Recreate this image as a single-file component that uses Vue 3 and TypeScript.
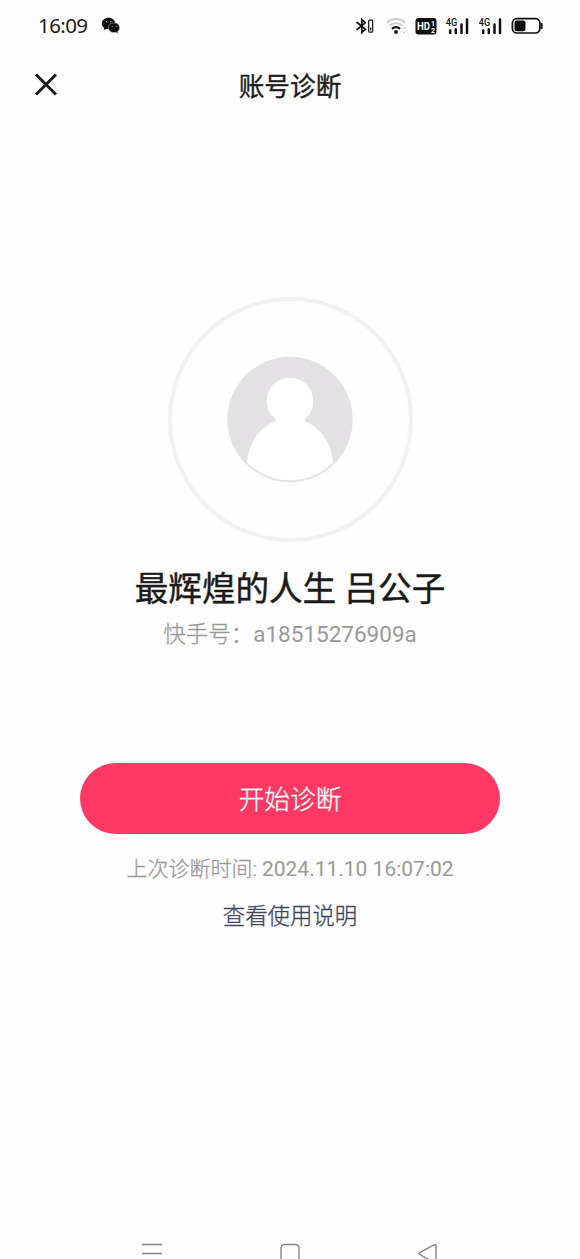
<script setup lang="ts">
const time = '16:09'
const account = {
  name: '最辉煌的人生 吕公子',
  id: 'a18515276909a',
  lastCheck: '2024.11.10 16:07:02',
}
const networks = ['sim1', 'sim2']
</script>

<template>
  <div class="screen">
    <header class="status">
      <span class="clock">{{ time }}</span>
      <svg class="wechat" width="20" height="18" viewBox="0 0 20 18">
        <path d="M7.500 .8C3.600.8 .8 3.300 .8 6.500c0 1.900.9 3.300 2.300 4.300L2.700 13.300l2.600-1.500c.7.2 1.400.3 2.200.3C11.200 12.100 14.200 9.700 14.200 6.500S11.200.8 7.500.8Z" fill="#0b0b0b" />
        <path d="M13 5.800c-3.200 0-5.600 2-5.600 4.900s2.400 4.900 5.600 4.900c.7 0 1.300-.1 1.900-.3l2.300 1.200-.5-2c1.200-.9 1.900-2.200 1.900-3.800 0-2.900-2.400-4.900-5.600-4.900Z" fill="#0b0b0b" stroke="#ccc" stroke-width=".5" />
        <g fill="#ccc"><circle cx="5.300" cy="4.600" r=".7" /><circle cx="9.700" cy="4.600" r=".7" /><circle cx="11.200" cy="9.300" r=".6" /><circle cx="15" cy="9.300" r=".6" /></g>
      </svg>
      <div class="indicators">
        <svg class="bluetooth" width="20" height="18" viewBox="0 0 20 18" fill="none" stroke="#111">
          <path d="M2.500 5 11.300 12.200 7.800 15.500V2.500l3.500 3.300L2.500 13" stroke-width="1.700" />
          <rect x="14.700" y="3.200" width="4" height="12" rx="1" stroke-width="1.200" />
          <path d="M16.700 10.500v3" stroke-width="1.200" />
        </svg>
        <svg class="wifi" width="22" height="18" viewBox="0 0 22 18" fill="none">
          <path d="M1.800 5.800C7 .8 15 .8 20.200 5.800" stroke="#d0d0d0" stroke-width="2" />
          <path d="M4.500 8.800c3.700-3.700 9.300-3.700 13 0" stroke="#ccc" stroke-width="1.800" />
          <path d="M7 11.800c2.400-2 5.600-2 8 0" stroke="#111" stroke-width="2.200" />
          <circle cx="11" cy="15" r="1.900" fill="#111" />
          <path d="m17.500 12 1.500-1.800 1.500 1.800m-3 2.200 1.500 1.800 1.500-1.800" stroke="#c8c8c8" />
        </svg>
        <svg class="hd" width="22" height="18" viewBox="0 0 22 18">
          <rect x=".5" y="1" width="21" height="16.500" rx="3" fill="#0c0c0c" />
          <text x="2" y="13.200" font-size="11.500" font-weight="700" textLength="13" lengthAdjust="spacingAndGlyphs" fill="#fff">HD</text>
          <text x="16" y="8.800" font-size="7" font-weight="700" fill="#fff">1</text>
          <text x="16" y="15.500" font-size="7" font-weight="700" fill="#fff">2</text>
        </svg>
        <svg v-for="network in networks" :key="network" class="signal" width="25" height="20" viewBox="0 0 25 20">
          <text x=".8" y="9.800" font-size="10.500" font-weight="500" textLength="11.500" lengthAdjust="spacingAndGlyphs" fill="#111">4G</text>
          <g stroke="#111" stroke-width="2.500" stroke-linecap="round">
            <path d="M5.200 14.500v2.500M10.800 13.200V17M16.500 8.500V17M22 3.500V17" />
          </g>
        </svg>
        <svg class="battery" width="33" height="18" viewBox="0 0 33 18">
          <rect x="1.400" y="1.700" width="27.500" height="14.300" rx="4.500" fill="none" stroke="#111" stroke-width="1.700" />
          <rect x="3.500" y="3.500" width="11" height="10.800" rx="2.500" fill="#0b0b0b" />
          <path d="M30.700 6.700v4.500" stroke="#111" stroke-width="1.800" stroke-linecap="round" />
        </svg>
      </div>
    </header>

    <nav class="titlebar">
      <svg class="close" width="24" height="24" viewBox="0 0 24 24">
        <path d="m2 1.500 20 20M22 1.500 2 21.500" stroke="#1b1b1b" stroke-width="3" />
      </svg>
      <h1>账号诊断</h1>
    </nav>

    <main>
      <div class="ring">
        <svg width="126" height="127" viewBox="0 0 126 127">
          <circle cx="63" cy="63.500" r="62.700" fill="#e3e1e4" />
          <circle cx="63" cy="45" r="23.300" fill="#fff" />
          <path d="M49 62 48 65.500C33 71 21.500 87 20 106.500a61 61 0 0 0 86 0C104.500 87 93 71 78 65.500L77 62Z" fill="#fff" />
        </svg>
      </div>
      <h2>{{ account.name }}</h2>
      <p class="account">快手号：<span>{{ account.id }}</span></p>
      <button type="button">开始诊断</button>
      <p class="last">上次诊断时间: <span>{{ account.lastCheck }}</span></p>
      <a class="help">查看使用说明</a>
    </main>

    <footer>
      <svg width="22" height="18" viewBox="0 0 22 18"><path d="M1 3.500h20M1 12.500h20" /></svg>
      <svg width="22" height="18" viewBox="0 0 22 18"><rect x="2" y="3.500" width="18" height="18" rx="3.500" /></svg>
      <svg width="22" height="18" viewBox="0 0 22 18"><path d="M17.500 3.700 2.700 11.700q-1.400.9 0 1.800l14.800 8q1.500.5 1.500-1V4.700q0-1.500-1.500-1Z" /></svg>
    </footer>
  </div>
</template>

<style>
body {
  margin: 0;
  background: #fefefe;
}
</style>

<style scoped>
.screen {
  width: 580px;
  height: 1259px;
  overflow: hidden;
  display: flex;
  flex-direction: column;
  background: #fefefe;
  color: #1b1b1b;
  font-family: Roboto, "Noto Sans CJK SC", sans-serif;
}
h1, h2, p {
  margin: 0;
  font-weight: 400;
  white-space: nowrap;
}
.status {
  height: 52px;
  padding: 0 36px 0 38px;
  display: flex;
  align-items: center;
}
.clock {
  width: 50px;
  padding-bottom: 2px;
  font: 20.5px/50px "Noto Sans", sans-serif;
  letter-spacing: -0.6px;
  white-space: nowrap;
}
.wechat {
  margin-left: 13px;
}
.indicators {
  margin-left: auto;
  display: flex;
  align-items: center;
}
.wifi {
  margin-left: 11px;
}
.hd {
  margin-left: 8px;
}
.signal {
  margin-left: 8px;
}
.battery {
  margin-left: 8px;
}
.titlebar {
  height: 66px;
  display: grid;
  grid-template-columns: 58px 1fr 58px;
  align-items: center;
}
.close {
  justify-self: end;
}
h1 {
  padding-top: 4px;
  text-align: center;
  font-size: 25.7px;
  line-height: 38px;
  -webkit-text-stroke: 0.35px currentColor;
}
main {
  flex: 1;
  display: flex;
  flex-direction: column;
  align-items: center;
}
.ring {
  box-sizing: border-box;
  width: 245px;
  height: 245px;
  margin-top: 179px;
  border: 4px solid #f3f0f2;
  border-radius: 50%;
  display: flex;
  align-items: center;
  justify-content: center;
}
h2 {
  margin-top: 23px;
  font-size: 33.6px;
  line-height: 50px;
  -webkit-text-stroke: 0.45px currentColor;
}
.account {
  margin-top: 2px;
  font-size: 22.5px;
  line-height: 34px;
  font-weight: 300;
  color: #999;
  -webkit-text-stroke: 0.3px currentColor;
}
.account span,
.last span {
  font-weight: 400;
  -webkit-text-stroke: 0;
}
button {
  width: 420px;
  height: 71px;
  margin-top: 112px;
  padding: 0 0 2px;
  border: 0;
  border-radius: 36px;
  background: #ff3864;
  color: #fff;
  font-family: inherit;
  font-size: 25.7px;
  font-weight: 300;
  -webkit-text-stroke: 0.3px currentColor;
}
.last {
  margin-top: 19px;
  font-size: 21px;
  line-height: 32px;
  font-weight: 300;
  color: #999;
  -webkit-text-stroke: 0.3px currentColor;
}
.help {
  margin-top: 14px;
  font-size: 22.4px;
  line-height: 34px;
  font-weight: 300;
  color: #3b4464;
  -webkit-text-stroke: 0.3px currentColor;
}
footer {
  height: 18px;
  padding: 0 141px;
  display: flex;
  justify-content: space-between;
}
footer svg {
  fill: none;
  stroke: #858585;
  stroke-width: 1.4;
}
</style>
